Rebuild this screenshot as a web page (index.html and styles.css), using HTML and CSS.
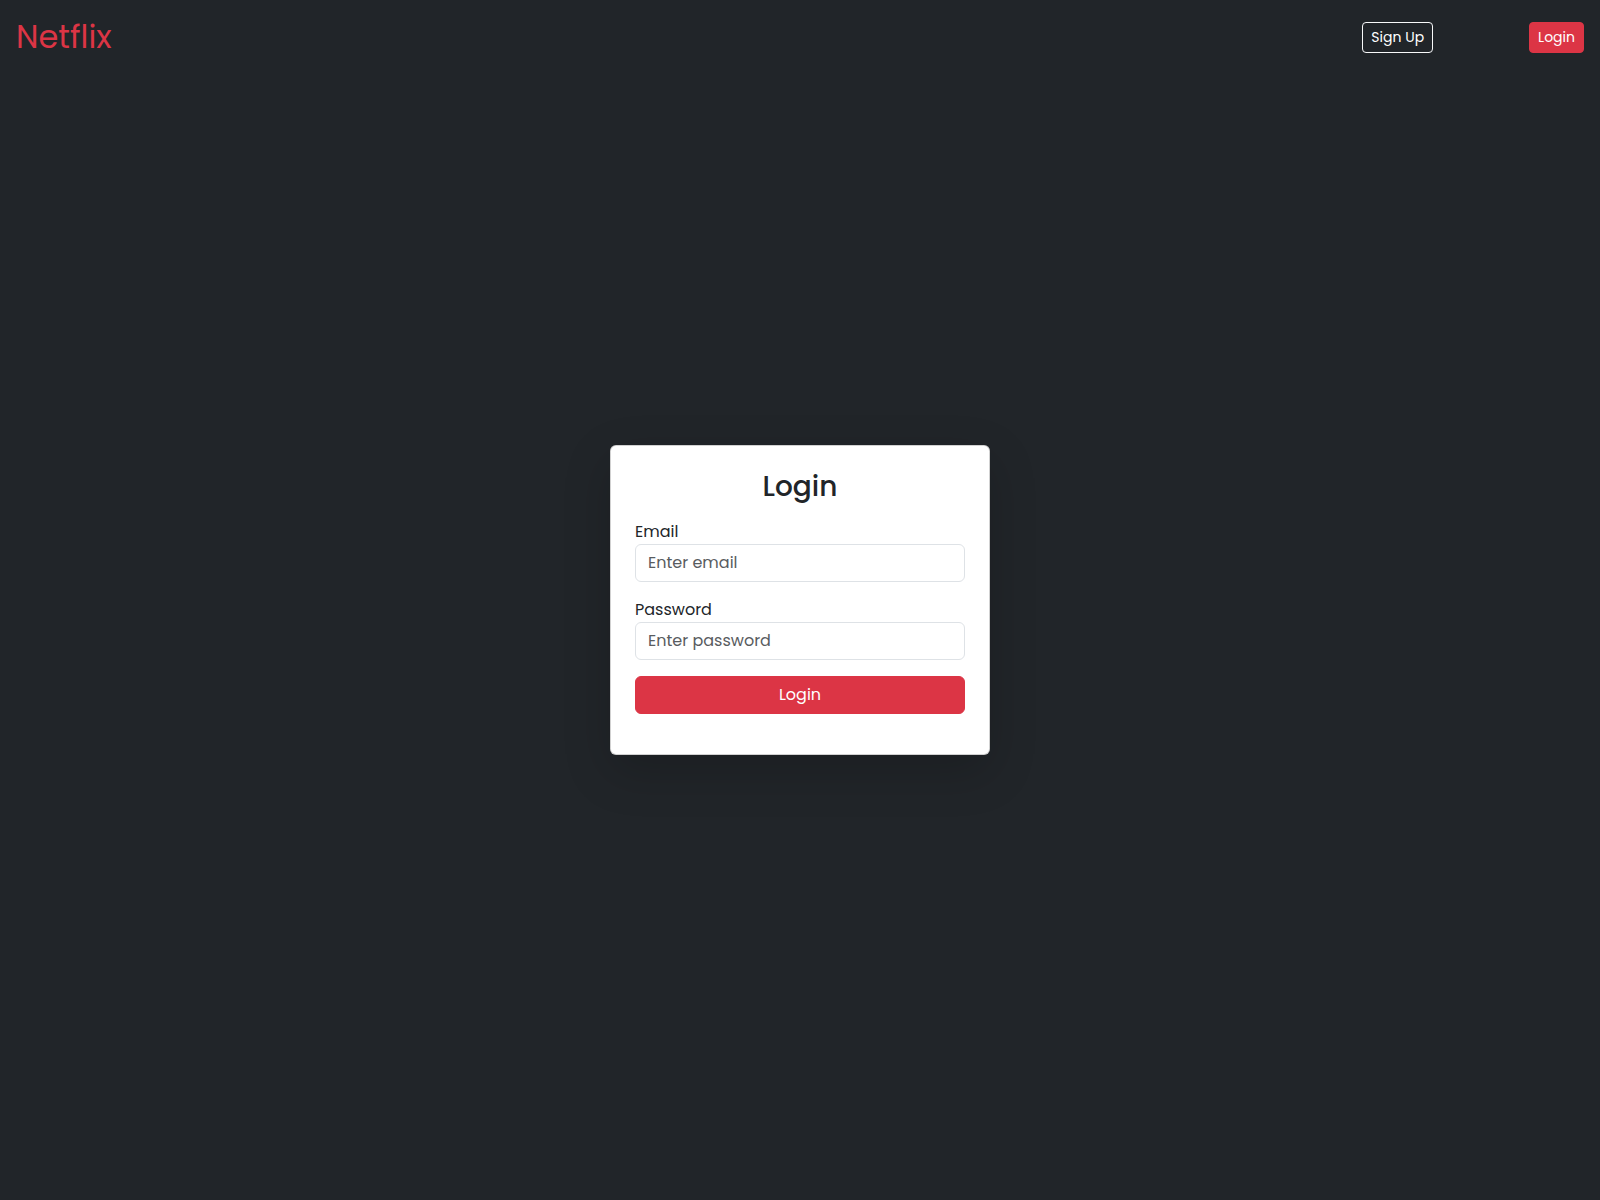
FILE: index.html
```html
<!DOCTYPE html>
<html lang="en">
<head>
  <meta charset="utf-8">
  <meta name="viewport" content="width=device-width, initial-scale=1">
  <title>Netflix Login</title>
  <link rel="stylesheet" href="styles.css">
</head>
<body class="page">
  <header class="navbar">
    <a class="brand" href="#">Netflix</a>
    <nav class="nav-actions">
      <button class="btn btn-small btn-outline" type="button">Sign Up</button>
      <button class="btn btn-small btn-danger" type="button">Login</button>
    </nav>
  </header>
  <main class="card">
    <h1 class="card-title">Login</h1>
    <form class="form">
      <div class="field">
        <label class="label" for="email">Email</label>
        <input class="input" id="email" type="email" placeholder="Enter email">
      </div>
      <div class="field">
        <label class="label" for="password">Password</label>
        <input class="input" id="password" type="password" placeholder="Enter password">
      </div>
      <button class="btn btn-danger" type="submit">Login</button>
    </form>
  </main>
</body>
</html>
```

FILE: styles.css
```css
*,
*::before,
*::after {
  box-sizing: border-box;
}

.page {
  display: grid;
  grid-template-rows: 1fr auto 1fr;
  min-height: 100vh;
  margin: 0;
  background: #212529;
  color: #212529;
  font-family: Poppins, "Open Sans", sans-serif;
  font-size: 16px;
  line-height: 24px;
}

.navbar {
  display: flex;
  align-items: center;
  align-self: start;
  justify-content: space-between;
  padding: 13px 16px;
}

.brand {
  color: #dc3545;
  font-size: 32px;
  line-height: 48px;
  text-decoration: none;
}

.nav-actions {
  display: flex;
  gap: 96px;
}

.btn {
  padding: 6px 12px;
  border: 1px solid transparent;
  border-radius: 6px;
  color: #fff;
  font: inherit;
  cursor: pointer;
}

.btn-small {
  padding: 4px 8px;
  border-radius: 4px;
  font-size: 14px;
  line-height: 21px;
}

.btn-outline {
  border-color: #f8f9fa;
  background: transparent;
}

.btn-danger {
  border-color: #dc3545;
  background: #dc3545;
}

.card {
  justify-self: center;
  width: 100%;
  max-width: 380px;
  padding: 24px 24px 40px;
  border: 1px solid rgba(0, 0, 0, 0.18);
  border-radius: 6px;
  background: #fff;
  background-clip: border-box;
  box-shadow: 0 16px 48px rgba(0, 0, 0, 0.18);
}

.card-title {
  margin: 0 0 16px;
  font-size: 28px;
  font-weight: 500;
  line-height: 34px;
  text-align: center;
}

.form {
  display: flex;
  flex-direction: column;
  gap: 16px;
}

.label {
  display: block;
}

.input {
  display: block;
  width: 100%;
  padding: 6px 12px;
  border: 1px solid #dee2e6;
  border-radius: 6px;
  background: #fff;
  color: #212529;
  font: inherit;
}

.input::placeholder {
  color: #595c5f;
  opacity: 1;
}
```
